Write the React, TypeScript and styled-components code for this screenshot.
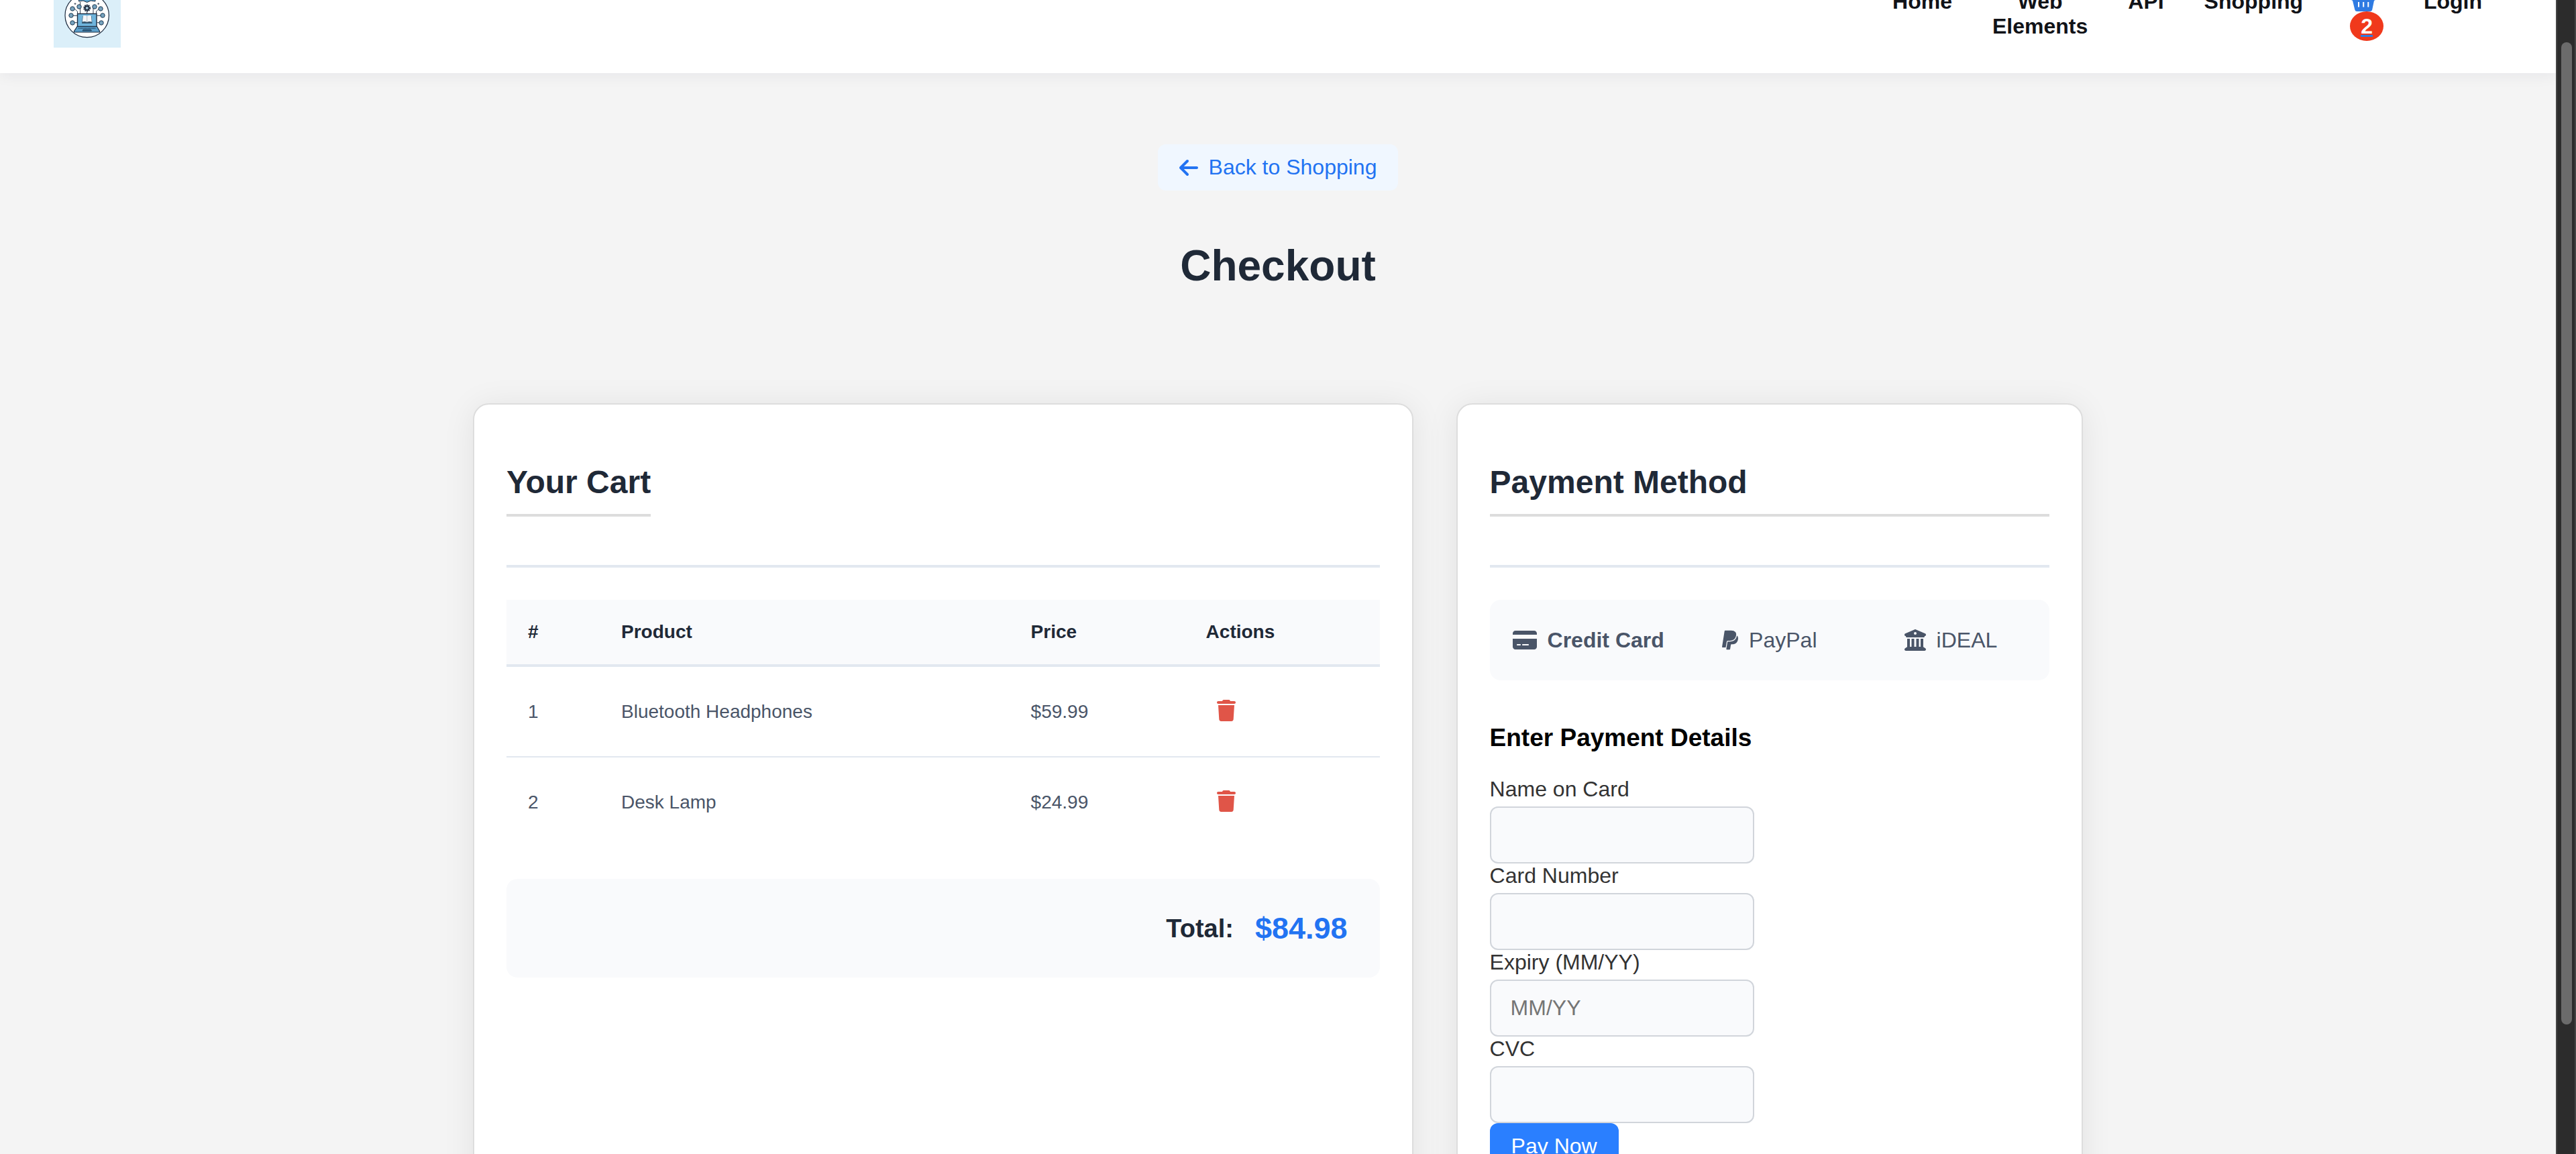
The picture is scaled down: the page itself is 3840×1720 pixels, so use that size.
import React from "react";
import styled, { createGlobalStyle } from "styled-components";
import {
  FaArrowLeft,
  FaBuildingColumns,
  FaCreditCard,
  FaPaypal,
  FaTrash,
} from "react-icons/fa6";

const color = {
  page: "#f4f4f4",
  surface: "#ffffff",
  soft: "#f9fafc",
  heading: "#1f2937",
  body: "#4a5568",
  label: "#333333",
  rule: "#e2e8f0",
  edge: "#dddddd",
  link: "#2273f2",
  primary: "#2a7fff",
  danger: "#e05548",
  badge: "#f0391c",
};

const GlobalStyle = createGlobalStyle`
  * { box-sizing: border-box; }
  body {
    margin: 0;
    background: ${color.page};
    font-family: "Liberation Sans", Arial, sans-serif;
    font-size: 32px;
    line-height: 37px;
  }
  button, input { font: inherit; }
`;

const Frame = styled.div`
  display: flex;
  height: 100vh;
  overflow: hidden;
`;

const Viewport = styled.div`
  flex: 1;
  min-width: 0;
  overflow: hidden;
`;

/* The page sits a little way down its scroll range. */
const Page = styled.div`
  margin-top: -67px;
`;

const ScrollTrack = styled.div`
  display: flex;
  width: 30px;
  padding: 63px 4px 193px 6px;
  background: #2c2c2c;
  border: solid #454545;
  border-width: 0 2px;
`;

const ScrollThumb = styled.div`
  flex: 1;
  border-radius: 8px;
  background: #6b6b6b;
`;

const Header = styled.header`
  display: flex;
  align-items: center;
  justify-content: space-between;
  padding: 38px 80px;
  background: ${color.surface};
  box-shadow: 0 4px 20px rgba(20, 20, 60, 0.06);
`;

const LogoLink = styled.a`
  display: block;
  width: 100px;
  height: 100px;
`;

const NavList = styled.ul`
  display: flex;
  align-items: flex-start;
  margin: 0;
  padding: 0 30px 0 0;
  gap: 60px;
  list-style: none;
`;

const NavItem = styled.li<{ $narrow?: boolean }>`
  width: ${(p) => (p.$narrow ? "min-content" : "auto")};
  text-align: center;
`;

const NavLink = styled.a`
  color: #111318;
  font-weight: 700;
  text-decoration: none;
`;

const CartLink = styled.a`
  display: flex;
  flex-direction: column;
  align-items: center;
  color: #2f7be2;
  font-weight: 700;
`;

const CartIcon = styled.svg`
  display: block;
  height: 37px;
`;

const Badge = styled.span`
  margin: -4px 0 -4px 10px;
  padding: 4px 16px;
  border-radius: 50%;
  background: ${color.badge};
  color: #fff;
  line-height: 36px;
`;

const Underlined = styled.span`
  text-decoration: underline 3px #2f7be2;
`;

const Main = styled.main`
  display: flex;
  flex-direction: column;
  align-items: center;
  padding: 106px 48px 96px;
`;

const BackLink = styled.a`
  display: flex;
  align-items: center;
  gap: 16px;
  padding: 16px 32px;
  border-radius: 12px;
  background: #f0f7ff;
  color: ${color.link};
  text-decoration: none;

  svg {
    width: 28px;
    height: 32px;
  }
`;

const Title = styled.h1`
  margin: 75px 0 168px;
  color: ${color.heading};
  font-size: 64px;
  line-height: 74px;
`;

const Columns = styled.div`
  display: grid;
  grid-template-columns: 3fr 2fr;
  gap: 64px;
  width: 100%;
  max-width: 2400px;
`;

const Card = styled.section`
  min-width: 0;
  padding: 48px;
  border: 2px solid ${color.edge};
  border-radius: 24px;
  background: ${color.surface};
  box-shadow: 0 4px 48px rgba(0, 0, 0, 0.08);
`;

const CardHead = styled.div`
  display: flex;
  margin-bottom: 48px;
  padding: 40px 0 72px;
  border-bottom: 4px solid ${color.rule};
`;

const CardTitle = styled.h2<{ $wide?: boolean }>`
  flex: ${(p) => (p.$wide ? 1 : "none")};
  margin: 0;
  padding-bottom: 20px;
  border-bottom: 4px solid ${color.edge};
  color: ${color.heading};
  font-size: 48px;
  line-height: 55px;
`;

const CartTable = styled.table`
  width: 100%;
  border-collapse: separate;
  border-spacing: 0;
  table-layout: fixed;
  font-size: 28px;
  line-height: 32px;
  text-align: left;
`;

const HeadCell = styled.th<{ $width?: number }>`
  width: ${(p) => (p.$width ? `${p.$width}px` : "auto")};
  padding: 32px;
  border-bottom: 4px solid ${color.rule};
  background: ${color.soft};
  color: ${color.heading};
`;

const BodyCell = styled.td`
  padding: 32px;
  color: ${color.body};

  tr:not(:last-child) > & {
    border-bottom: 2px solid ${color.rule};
  }
`;

const DeleteButton = styled.button`
  display: flex;
  align-items: center;
  height: 69px;
  padding: 16px 16px 20px;
  border: 0;
  background: none;
  color: ${color.danger};

  svg {
    width: 28px;
    height: 32px;
  }
`;

const TotalBar = styled.div`
  display: flex;
  align-items: center;
  justify-content: flex-end;
  gap: 32px;
  margin-top: 48px;
  padding: 48px;
  border-radius: 16px;
  background: ${color.soft};
  color: ${color.heading};
  font-size: 38px;
  line-height: 44px;
  font-weight: 700;
`;

const Amount = styled.span`
  color: ${color.link};
  font-size: 45px;
  line-height: 51px;
`;

const Methods = styled.div`
  display: flex;
  gap: 8px;
  margin-bottom: 64px;
  padding: 16px;
  border-radius: 16px;
  background: ${color.soft};
`;

const MethodButton = styled.button<{ $icon: number; $active?: boolean }>`
  display: flex;
  flex: 1 1 0;
  align-items: center;
  justify-content: center;
  gap: 16px;
  min-width: 0;
  padding: 24px 16px;
  border: 0;
  background: none;
  color: ${color.body};
  font-weight: ${(p) => (p.$active ? 700 : 400)};
  line-height: 40px;
  white-space: nowrap;

  svg {
    flex: none;
    width: ${(p) => p.$icon}px;
    height: 32px;
  }
`;

const PaymentForm = styled.form`
  display: flex;
  flex-direction: column;
  align-items: flex-start;
  width: 394px;
`;

const FormTitle = styled.h3`
  margin: 0 0 37px;
  color: #000;
  font-size: 37px;
  line-height: 43px;
  white-space: nowrap;
`;

const Label = styled.label`
  margin-bottom: 7px;
  color: ${color.label};
`;

const Input = styled.input`
  width: 100%;
  height: 85px;
  padding: 22px 29px;
  border: 2px solid #d1d5db;
  border-radius: 12px;
  background: ${color.soft};

  &::placeholder {
    color: #757575;
  }
`;

const PayButton = styled.button`
  padding: 16px 32px;
  border: 0;
  border-radius: 12px;
  background: ${color.primary};
  color: #fff;
`;

const NODES: [number, number][] = [
  [28, 42], [26, 52], [28, 63], [70, 42], [73, 52], [71, 63], [38, 39], [61, 39],
];

const Logo = () => (
  <svg viewBox="0 0 100 100" width="100" height="100" aria-hidden="true">
    <rect width="100" height="100" fill="#dbeff9" />
    <circle cx="49.7" cy="52" r="32.7" fill="#fff" stroke="#1d2b3f" strokeWidth="1.2" />
    <path d="M37.5 24V31L44 30L49.7 32.5L55.5 30L62 31V24Z" fill="#5ba5d0" stroke="#1d2b3f" strokeWidth="1" />
    <path
      d="M31 42L35.5 46V50M29 52.3H35M31 62.7H35M67.5 42L63.5 46V50M70 52.3H64.5M68 62.7H64.5M39.5 32V50M59 40V57M49.7 45V50"
      fill="none"
      stroke="#1d2b3f"
      strokeWidth="0.9"
    />
    {NODES.map(([x, y]) => (
      <g key={`${x}-${y}`}>
        <circle cx={x} cy={y} r="3.2" fill="#7dbbdc" stroke="#1d2b3f" strokeWidth="1" />
        <circle cx={x} cy={y} r="1.2" fill="#d5ecf7" stroke="#2a4a68" strokeWidth="0.6" />
      </g>
    ))}
    <path d="M32 33.2V36.2M30.5 34.7H33.5M66.7 33.2V36.2M65.2 34.7H68.2" stroke="#1d2b3f" strokeWidth="0.8" />
    <circle cx="49.7" cy="41" r="4.6" fill="none" stroke="#1d2b3f" strokeWidth="1.8" strokeDasharray="1.8 1.1" />
    <circle cx="49.7" cy="41" r="3" fill="#a9c8da" stroke="#1d2b3f" strokeWidth="1.8" />
    <rect x="35.5" y="49.5" width="28.5" height="19" fill="#6fb4dc" stroke="#1d2b3f" strokeWidth="1.4" />
    <path d="M43 53L42 64H57.5L56.5 53Z" fill="#35566f" />
    <path d="M43.8 52.3Q47 51.3 49.7 52.8Q52.5 51.3 55.8 52.3L56.8 61.5Q52.5 60.5 49.7 62Q46.5 60.5 42.8 61.5Z" fill="#f3f5f8" />
    <path d="M49.7 52.8V62" stroke="#8a93a0" strokeWidth="0.6" />
    <path d="M35 68.5H64.5L68.5 75.5V77H30.5V75.5Z" fill="#5b9fcb" stroke="#1d2b3f" strokeWidth="1.2" />
    <path d="M37 71H63" stroke="#1d3a56" strokeWidth="1.4" strokeDasharray="1.2 0.8" />
    <path d="M44 73H55.5L56.5 75H43Z" fill="#2f6288" stroke="#1d2b3f" strokeWidth="0.6" />
  </svg>
);

const Basket = () => (
  <CartIcon width="40" height="37" viewBox="0 0 40 37" aria-hidden="true">
    <path
      fill="currentColor"
      d="M20 3L30 12H38V16L36 17L33.2 30.5Q32.6 33 30 33H10.5Q7.9 33 7.3 30.500L4 17L2 16V12H10ZM20 7L15 12H25Z"
    />
    <path d="M13 19V26.500M20.200 19V26.500M27.300 19V26.500" stroke="#fff" strokeWidth="2" />
  </CartIcon>
);

const items = [
  { id: 1, name: "Bluetooth Headphones", price: "$59.99" },
  { id: 2, name: "Desk Lamp", price: "$24.99" },
];

const fields = [
  { id: "card-name", label: "Name on Card" },
  { id: "card-number", label: "Card Number" },
  { id: "card-expiry", label: "Expiry (MM/YY)", placeholder: "MM/YY" },
  { id: "card-cvc", label: "CVC" },
];

export default function App() {
  return (
    <>
      <GlobalStyle />
      <Frame>
        <Viewport>
          <Page>
            <Header>
              <LogoLink href="#" aria-label="Home page">
                <Logo />
              </LogoLink>
              <nav>
                <NavList>
                  <NavItem><NavLink href="#">Home</NavLink></NavItem>
                  <NavItem $narrow><NavLink href="#">Web Elements</NavLink></NavItem>
                  <NavItem><NavLink href="#">API</NavLink></NavItem>
                  <NavItem><NavLink href="#">Shopping</NavLink></NavItem>
                  <NavItem>
                    <CartLink href="#">
                      <Basket />
                      <Badge><Underlined>2</Underlined></Badge>
                    </CartLink>
                  </NavItem>
                  <NavItem><NavLink href="#">Login</NavLink></NavItem>
                </NavList>
              </nav>
            </Header>

            <Main>
              <BackLink href="#">
                <FaArrowLeft />
                <span>Back to Shopping</span>
              </BackLink>
              <Title>Checkout</Title>

              <Columns>
                <Card>
                  <CardHead>
                    <CardTitle>Your Cart</CardTitle>
                  </CardHead>
                  <CartTable>
                    <thead>
                      <tr>
                        <HeadCell $width={139}>#</HeadCell>
                        <HeadCell>Product</HeadCell>
                        <HeadCell $width={261}>Price</HeadCell>
                        <HeadCell $width={291}>Actions</HeadCell>
                      </tr>
                    </thead>
                    <tbody>
                      {items.map((item) => (
                        <tr key={item.id}>
                          <BodyCell>{item.id}</BodyCell>
                          <BodyCell>{item.name}</BodyCell>
                          <BodyCell>{item.price}</BodyCell>
                          <BodyCell>
                            <DeleteButton type="button" aria-label={`Remove ${item.name}`}>
                              <FaTrash />
                            </DeleteButton>
                          </BodyCell>
                        </tr>
                      ))}
                    </tbody>
                  </CartTable>
                  <TotalBar>
                    <span>Total:</span>
                    <Amount>$84.98</Amount>
                  </TotalBar>
                </Card>

                <Card>
                  <CardHead>
                    <CardTitle $wide>Payment Method</CardTitle>
                  </CardHead>
                  <Methods>
                    <MethodButton type="button" $icon={36} $active>
                      <FaCreditCard />
                      <span>Credit Card</span>
                    </MethodButton>
                    <MethodButton type="button" $icon={24}>
                      <FaPaypal />
                      <span>PayPal</span>
                    </MethodButton>
                    <MethodButton type="button" $icon={32}>
                      <FaBuildingColumns />
                      <span>iDEAL</span>
                    </MethodButton>
                  </Methods>
                  <PaymentForm>
                    <FormTitle>Enter Payment Details</FormTitle>
                    {fields.map((field) => (
                      <React.Fragment key={field.id}>
                        <Label htmlFor={field.id}>{field.label}</Label>
                        <Input id={field.id} type="text" placeholder={field.placeholder} />
                      </React.Fragment>
                    ))}
                    <PayButton type="button">Pay Now</PayButton>
                  </PaymentForm>
                </Card>
              </Columns>
            </Main>
          </Page>
        </Viewport>
        <ScrollTrack>
          <ScrollThumb />
        </ScrollTrack>
      </Frame>
    </>
  );
}
